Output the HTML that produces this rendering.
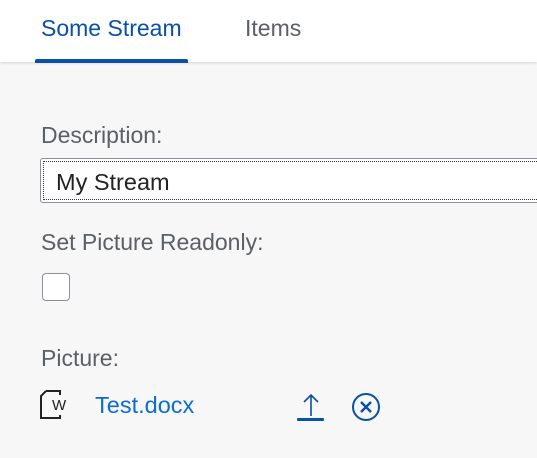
<!DOCTYPE html>
<html><head><style>
html,body{margin:0;padding:0;width:537px;height:458px;overflow:hidden;background:#f7f7f7;font-family:"Liberation Sans",sans-serif}
.hdr{position:absolute;left:0;top:0;width:537px;height:62px;background:#fff;box-shadow:0 1px 3px rgba(0,0,0,.15)}
.t{position:absolute;font-size:23px;top:15px}
.ul{position:absolute;left:35px;top:59px;width:153px;height:4px;background:#0a4fa8;border-radius:2px 2px 0 0}
.lbl{position:absolute;left:41px;font-size:23px;color:#5b6066}
.inp{position:absolute;left:40px;top:158px;width:520px;height:45px;border:1px solid #8a9099;border-radius:3px;background:#fff;box-sizing:border-box}
.inp div{position:absolute;inset:2px;border:1px dotted #333}
.inp span{position:absolute;left:15px;top:10px;font-size:23.5px;color:#222}
.cb{position:absolute;left:42px;top:273px;width:28px;height:28px;box-sizing:border-box;border:1px solid #8a9099;border-radius:4px;background:#fff}
</style></head><body>
<div class="hdr">
<div class="t" style="left:41px;color:#0a4fa8">Some Stream</div>
<div class="t" style="left:245px;color:#5b6066">Items</div>
<div class="ul"></div>
</div>
<div class="lbl" style="top:122px">Description:</div>
<div class="inp"><div></div><span>My Stream</span></div>
<div class="lbl" style="top:229px">Set Picture Readonly:</div>
<div class="cb"></div>
<div class="lbl" style="top:345px">Picture:</div>
<svg style="position:absolute;left:38px;top:389px" width="32" height="32" viewBox="0 0 32 32">
<path d="M8 2 H22 V6 M8 2 L3 7 V29 H22 V26" fill="none" stroke="#222" stroke-width="2"/>
<text x="14" y="21" font-size="15" font-family="Liberation Sans" fill="#222">W</text>
</svg>
<div style="position:absolute;left:95px;top:392px;font-size:23.5px;color:#0a6ed1">Test.docx</div>
<svg style="position:absolute;left:296px;top:390px" width="30" height="32" viewBox="0 0 30 32">
<path d="M15 26 V5 M8 12 L15 5 L22 12" fill="none" stroke="#0a4fa8" stroke-width="1.6"/>
<rect x="1" y="28" width="27" height="3" rx="1" fill="#0a4fa8"/>
</svg>
<svg style="position:absolute;left:351px;top:392px" width="30" height="30" viewBox="0 0 30 30">
<circle cx="15" cy="15" r="13" fill="none" stroke="#0a4fa8" stroke-width="2"/>
<path d="M10 10 L20 20 M20 10 L10 20" stroke="#0a4fa8" stroke-width="2.4"/>
</svg>
</body></html>
